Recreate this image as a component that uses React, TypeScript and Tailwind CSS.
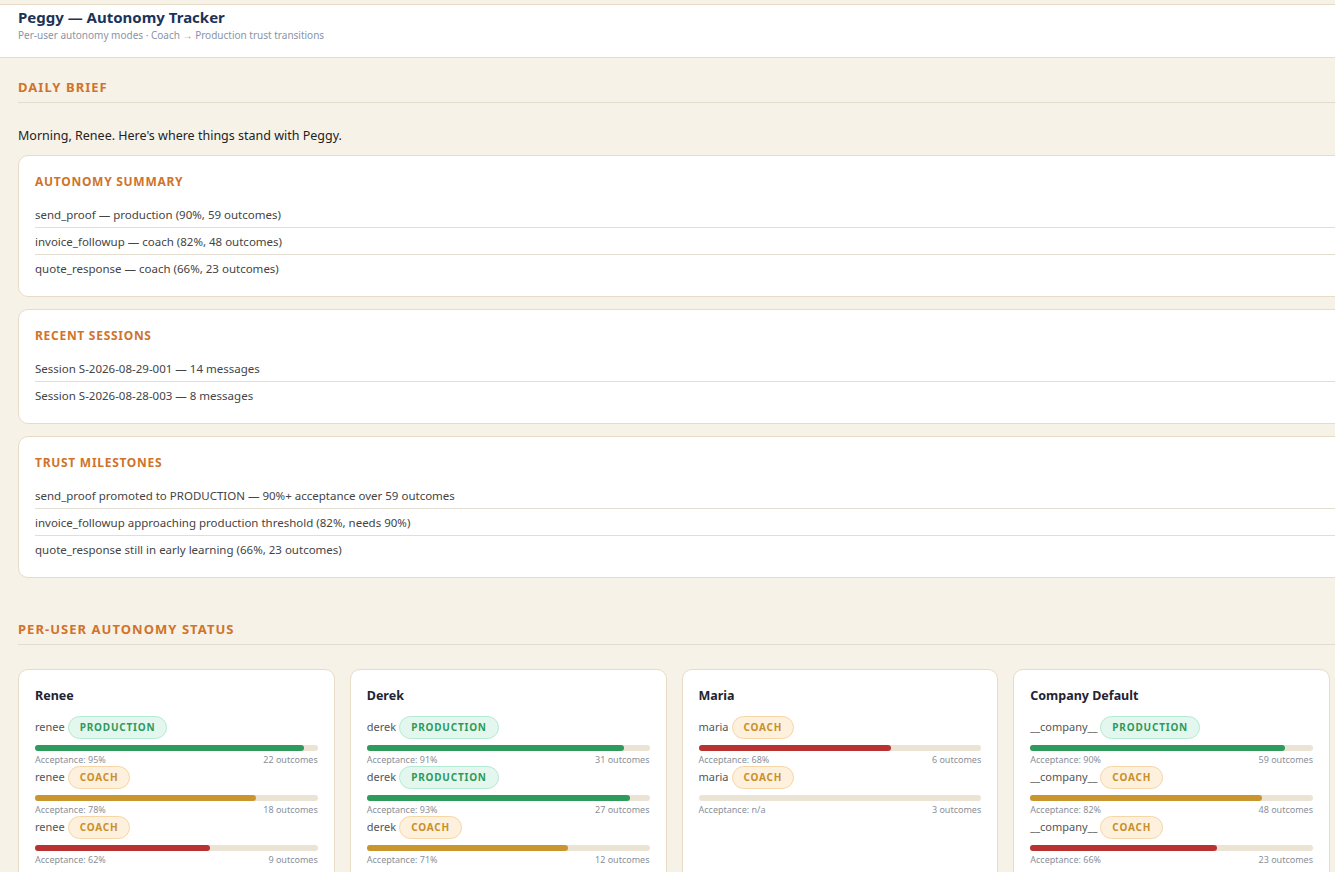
import React from "react";

const Prod = () => (
  <span className="inline-flex items-center h-[23px] px-[11px] rounded-full bg-[#e3f7ef] border border-[#b4ead3] text-[#2e9a5b] text-[10px] font-bold tracking-[0.08em]">PRODUCTION</span>
);
const Coach = () => (
  <span className="inline-flex items-center h-[23px] px-[11px] rounded-full bg-[#fdf0dd] border border-[#f6d6a6] text-[#c98f2a] text-[10px] font-bold tracking-[0.08em]">COACH</span>
);

type Row = { id: string; mode: "p" | "c"; pct: number; color: string; acc: string; out: string };

const users: { name: string; rows: Row[] }[] = [
  { name: "Renee", rows: [
    { id: "renee", mode: "p", pct: 95, color: "#2e9a5b", acc: "95%", out: "22 outcomes" },
    { id: "renee", mode: "c", pct: 78, color: "#c9952f", acc: "78%", out: "18 outcomes" },
    { id: "renee", mode: "c", pct: 62, color: "#b83232", acc: "62%", out: "9 outcomes" },
  ]},
  { name: "Derek", rows: [
    { id: "derek", mode: "p", pct: 91, color: "#2e9a5b", acc: "91%", out: "31 outcomes" },
    { id: "derek", mode: "p", pct: 93, color: "#2e9a5b", acc: "93%", out: "27 outcomes" },
    { id: "derek", mode: "c", pct: 71, color: "#c9952f", acc: "71%", out: "12 outcomes" },
  ]},
  { name: "Maria", rows: [
    { id: "maria", mode: "c", pct: 68, color: "#b83232", acc: "68%", out: "6 outcomes" },
    { id: "maria", mode: "c", pct: 0, color: "#b83232", acc: "n/a", out: "3 outcomes" },
  ]},
  { name: "Company Default", rows: [
    { id: "__company__", mode: "p", pct: 90, color: "#2e9a5b", acc: "90%", out: "59 outcomes" },
    { id: "__company__", mode: "c", pct: 82, color: "#c9952f", acc: "82%", out: "48 outcomes" },
    { id: "__company__", mode: "c", pct: 66, color: "#b83232", acc: "66%", out: "23 outcomes" },
  ]},
];

const BriefCard = ({ title, items }: { title: string; items: string[] }) => (
  <div className="bg-white border border-[#e8dcc6] rounded-[10px] px-4 pt-[17px] pb-[14px] mb-[12px]">
    <div className="text-[12px] font-bold tracking-[0.06em] text-[#d0732b] mb-[10px]">{title}</div>
    {items.map((t, i) => (
      <div key={i} className={`text-[11.5px] text-[#444] h-[27px] flex items-center ${i < items.length - 1 ? "border-b border-[#e3ddd2]" : ""}`}>{t}</div>
    ))}
  </div>
);

export default function App() {
  return (
    <div className="w-[1335px] h-[872px] overflow-hidden bg-[#f7f2e8]" style={{ fontFamily: '"Noto Sans", "Open Sans", sans-serif' }}>
      <div className="bg-white border-t border-[#e2e2e2] mt-[4px] border-b border-[#e8dcc6] h-[54px] px-[18px] pt-[2px]">
        <div className="text-[15px] font-bold text-[#1b3358] leading-[20px]">Peggy — Autonomy Tracker</div>
        <div className="text-[10px] text-[#8a94a6] leading-[16px]">Per-user autonomy modes · Coach → Production trust transitions</div>
      </div>
      <div className="w-[1380px] pl-[18px]">
        <div className="mt-[20px] text-[13px] font-bold tracking-[0.08em] text-[#d0732b] pb-[4px] border-b border-[#e3dccd]">DAILY BRIEF</div>
        <div className="mt-[24px] text-[12.5px] text-[#222] mb-[10px]">Morning, Renee. Here's where things stand with Peggy.</div>
        <BriefCard title="AUTONOMY SUMMARY" items={["send_proof — production (90%, 59 outcomes)", "invoice_followup — coach (82%, 48 outcomes)", "quote_response — coach (66%, 23 outcomes)"]} />
        <BriefCard title="RECENT SESSIONS" items={["Session S-2026-08-29-001 — 14 messages", "Session S-2026-08-28-003 — 8 messages"]} />
        <BriefCard title="TRUST MILESTONES" items={["send_proof promoted to PRODUCTION — 90%+ acceptance over 59 outcomes", "invoice_followup approaching production threshold (82%, needs 90%)", "quote_response still in early learning (66%, 23 outcomes)"]} />
        <div className="mt-[42px] text-[13px] font-bold tracking-[0.08em] text-[#d0732b] pb-[4px] border-b border-[#e3dccd]">PER-USER AUTONOMY STATUS</div>
        <div className="mt-[24px] grid grid-cols-4 gap-[15px] w-[1312px]">
          {users.map((u) => (
            <div key={u.name} className="bg-white border border-[#e8dcc6] rounded-[10px] px-4 pt-[17px] h-[260px]">
              <div className="text-[12.5px] font-bold text-[#1e2433] mb-[10px]">{u.name}</div>
              {u.rows.map((r, i) => (
                <div key={i}>
                  <div className="flex items-center gap-[3px] text-[11px] text-[#555]">
                    <span>{r.id}</span>{r.mode === "p" ? <Prod /> : <Coach />}
                  </div>
                  <div className="mt-[6px] h-[6px] rounded-full bg-[#ebe3d3]">
                    <div className="h-[6px] rounded-full" style={{ width: `${r.pct}%`, background: r.color }} />
                  </div>
                  <div className="flex justify-between text-[9px] text-[#8a8f99] mt-[3px] leading-[12px]">
                    <span>Acceptance: {r.acc}</span><span>{r.out}</span>
                  </div>
                </div>
              ))}
            </div>
          ))}
        </div>
      </div>
    </div>
  );
}
